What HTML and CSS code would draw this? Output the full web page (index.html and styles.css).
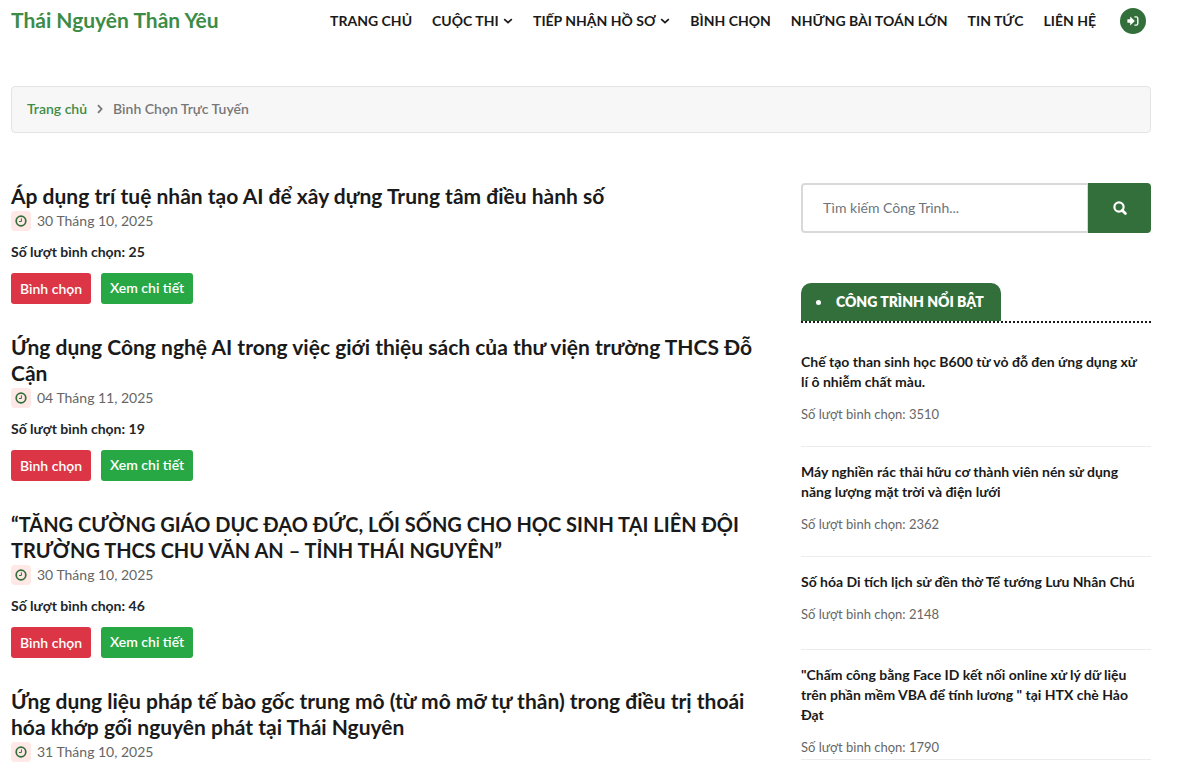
FILE: index.html
```html
<!DOCTYPE html>
<html lang="vi">
<head>
    <meta charset="UTF-8">
    <meta name="viewport" content="width=device-width, initial-scale=1.0">
    <title>Bình Chọn Trực Tuyến</title>
    <link rel="stylesheet" href="styles.css">
</head>
<body>
    <!-- shared icons -->
    <svg class="sprite" aria-hidden="true">
        <symbol id="clock" viewBox="0 0 12 12">
            <circle cx="6" cy="6" r="4.8" fill="none" stroke="currentColor" stroke-width="1.7"/>
            <path d="M6.4 3.4V6.5H4" fill="none" stroke="currentColor" stroke-width="1"/>
        </symbol>
        <symbol id="chevron" viewBox="0 0 10 6">
            <path d="M1.2 1.2L5 4.6L8.8 1.2" fill="none" stroke="currentColor" stroke-width="1.8"/>
        </symbol>
    </svg>

    <div class="container">
        <header class="header">
            <a href="#" class="logo">Thái Nguyên Thân Yêu</a>
            <nav class="menu">
                <a href="#">TRANG CHỦ</a>
                <a href="#">CUỘC THI <svg class="chevron"><use href="#chevron"/></svg></a>
                <a href="#">TIẾP NHẬN HỒ SƠ <svg class="chevron"><use href="#chevron"/></svg></a>
                <a href="#">BÌNH CHỌN</a>
                <a href="#">NHỮNG BÀI TOÁN LỚN</a>
                <a href="#">TIN TỨC</a>
                <a href="#">LIÊN HỆ</a>
                <a href="#" class="login" aria-label="Đăng nhập">
                    <svg width="12" height="10" viewBox="0 0 12 10">
                        <path d="M0.4 3.2H3.2V0.6L7.8 5L3.2 9.4V6.8H0.4Z" fill="#fff"/>
                        <path d="M7.4 0.9H9.2Q10.8 0.9 10.8 2.5V7.5Q10.8 9.1 9.2 9.1H7.4" fill="none" stroke="#fff" stroke-width="1.4"/>
                    </svg>
                </a>
            </nav>
        </header>

        <nav class="breadcrumb">
            <a href="#">Trang chủ</a>
            <svg width="6" height="10" viewBox="0 0 6 10"><path d="M1 1.2L4.6 5L1 8.8" fill="none" stroke="currentColor" stroke-width="1.8"/></svg>
            <span>Bình Chọn Trực Tuyến</span>
        </nav>

        <div class="layout">
            <main class="posts">
                <article class="post">
                    <h2><a href="#">Áp dụng trí tuệ nhân tạo AI để xây dựng Trung tâm điều hành số</a></h2>
                    <div class="date"><span class="date-icon"><svg><use href="#clock"/></svg></span>30 Tháng 10, 2025</div>
                    <p class="votes">Số lượt bình chọn: 25</p>
                    <div class="actions">
                        <button type="button" class="btn btn-danger">Bình chọn</button>
                        <a href="#" class="btn btn-success">Xem chi tiết</a>
                    </div>
                </article>

                <article class="post">
                    <h2><a href="#">Ứng dụng Công nghệ AI trong việc giới thiệu sách của thư viện trường THCS Đỗ Cận</a></h2>
                    <div class="date"><span class="date-icon"><svg><use href="#clock"/></svg></span>04 Tháng 11, 2025</div>
                    <p class="votes">Số lượt bình chọn: 19</p>
                    <div class="actions">
                        <button type="button" class="btn btn-danger">Bình chọn</button>
                        <a href="#" class="btn btn-success">Xem chi tiết</a>
                    </div>
                </article>

                <article class="post">
                    <h2 class="caps"><a href="#">“TĂNG CƯỜNG GIÁO DỤC ĐẠO ĐỨC, LỐI SỐNG CHO HỌC SINH TẠI LIÊN ĐỘI TRƯỜNG THCS CHU VĂN AN – TỈNH THÁI NGUYÊN”</a></h2>
                    <div class="date"><span class="date-icon"><svg><use href="#clock"/></svg></span>30 Tháng 10, 2025</div>
                    <p class="votes">Số lượt bình chọn: 46</p>
                    <div class="actions">
                        <button type="button" class="btn btn-danger">Bình chọn</button>
                        <a href="#" class="btn btn-success">Xem chi tiết</a>
                    </div>
                </article>

                <article class="post">
                    <h2><a href="#">Ứng dụng liệu pháp tế bào gốc trung mô (từ mô mỡ tự thân) trong điều trị thoái hóa khớp gối nguyên phát tại Thái Nguyên</a></h2>
                    <div class="date"><span class="date-icon"><svg><use href="#clock"/></svg></span>31 Tháng 10, 2025</div>
                </article>
            </main>

            <aside class="sidebar">
                <form class="search">
                    <input type="text" placeholder="Tìm kiếm Công Trình..." aria-label="Tìm kiếm Công Trình">
                    <button type="submit" aria-label="Tìm kiếm">
                        <svg width="14" height="14" viewBox="0 0 14 14"><circle cx="6" cy="6" r="4.6" fill="none" stroke="#fff" stroke-width="2.2"/><path d="M9.2 9.2L12.4 12.4" stroke="#fff" stroke-width="2.8" stroke-linecap="round"/></svg>
                    </button>
                </form>

                <div class="widget-title"><h3>CÔNG TRÌNH NỔI BẬT</h3></div>

                <ul class="featured">
                    <li>
                        <h4><a href="#">Chế tạo than sinh học B600 từ vỏ đỗ đen ứng dụng xử lí ô nhiễm chất màu.</a></h4>
                        <p>Số lượt bình chọn: 3510</p>
                    </li>
                    <li>
                        <h4><a href="#">Máy nghiền rác thải hữu cơ thành viên nén sử dụng năng lượng mặt trời và điện lưới</a></h4>
                        <p>Số lượt bình chọn: 2362</p>
                    </li>
                    <li>
                        <h4><a href="#">Số hóa Di tích lịch sử đền thờ Tể tướng Lưu Nhân Chú</a></h4>
                        <p>Số lượt bình chọn: 2148</p>
                    </li>
                    <li>
                        <h4><a href="#">"Chấm công bằng Face ID kết nối online xử lý dữ liệu trên phần mềm VBA để tính lương " tại HTX chè Hảo Đạt</a></h4>
                        <p>Số lượt bình chọn: 1790</p>
                    </li>
                </ul>
            </aside>
        </div>
    </div>
</body>
</html>
```
FILE: styles.css
```css
* {
    margin: 0;
    padding: 0;
    box-sizing: border-box;
}

body {
    background-color: #fff;
    color: #212529;
    font-family: Lato, "Noto Sans", sans-serif;
    font-size: 14px;
    line-height: 20px;
    padding-right: 20px;
}

a {
    color: inherit;
    text-decoration: none;
}

.sprite {
    display: none;
}

.container {
    max-width: 1140px;
    margin: 0 auto;
}

.header {
    display: flex;
    justify-content: space-between;
    align-items: center;
    height: 42px;
}

.logo {
    padding-bottom: 2px;
    color: #3c8c48;
    font-size: 21px;
    font-weight: 700;
}

.menu {
    display: flex;
    align-items: center;
    gap: 20px;
    padding-right: 5px;
    color: #1a1a1a;
    font-size: 14px;
    font-weight: 700;
    white-space: nowrap;
}

.chevron {
    width: 10px;
    height: 6px;
    margin-left: 1px;
    vertical-align: 2px;
}

.login {
    display: flex;
    align-items: center;
    justify-content: center;
    width: 26px;
    height: 26px;
    margin-left: 4px;
    border-radius: 50%;
    background-color: #336f3a;
}

.breadcrumb {
    display: flex;
    align-items: center;
    gap: 10px;
    margin-top: 44px;
    padding: 12px 15px 13px;
    border: 1px solid #e4e4e4;
    border-radius: 4px;
    background-color: #f7f7f7;
    color: #777;
    font-weight: 600;
}

.breadcrumb a {
    color: #3c8c48;
}

.layout {
    display: grid;
    grid-template-columns: 1fr 350px;
    gap: 40px;
    margin-top: 50px;
}

.post {
    margin-bottom: 30px;
}

.post h2 {
    color: #1a1a1a;
    font-size: 21px;
    font-weight: 700;
    line-height: 26px;
}

.post h2.caps {
    font-size: 20px;
}

.date {
    display: flex;
    align-items: center;
    gap: 6px;
    margin-top: 2px;
    color: #666;
    font-size: 14px;
}

.date-icon {
    display: flex;
    align-items: center;
    justify-content: center;
    width: 20px;
    height: 20px;
    border-radius: 4px;
    background-color: #ffe8e6;
    color: #336f3a;
}

.date-icon svg {
    width: 12px;
    height: 12px;
}

.votes {
    margin-top: 11px;
    font-weight: 700;
}

.actions {
    display: flex;
    gap: 10px;
    margin-top: 11px;
}

.btn {
    height: 31px;
    padding: 0 9px;
    border: none;
    border-radius: 3px;
    color: #fff;
    font-family: inherit;
    font-size: 14px;
    font-weight: 600;
    line-height: 30px;
    cursor: pointer;
}

.btn-danger {
    background-color: #dc3545;
}

.btn-success {
    background-color: #28a745;
}

.search {
    display: flex;
    height: 50px;
}

.search input {
    flex: 1;
    min-width: 0;
    padding: 0 20px 2px;
    border: 2px solid #d9d9d9;
    border-right-width: 1px;
    border-radius: 4px 0 0 4px;
    font-family: inherit;
    font-size: 14px;
    outline: none;
}

.search input::placeholder {
    color: #6c757d;
}

.search button {
    display: flex;
    align-items: center;
    justify-content: center;
    width: 63px;
    border: none;
    border-radius: 0 4px 4px 0;
    background-color: #336f3a;
    cursor: pointer;
}

.widget-title {
    margin-top: 50px;
    border-bottom: 2px dotted #1a1a1a;
}

.widget-title h3 {
    display: flex;
    align-items: center;
    gap: 15px;
    width: 200px;
    height: 38px;
    padding-left: 15px;
    border-radius: 10px 10px 0 0;
    background-color: #336f3a;
    color: #fff;
    font-size: 14px;
    font-weight: 800;
    white-space: nowrap;
}

.widget-title h3::before {
    content: "";
    width: 5px;
    height: 5px;
    border-radius: 50%;
    background-color: #fff;
}

.featured {
    margin-top: 29px;
    list-style: none;
}

.featured li {
    min-height: 78px;
    margin-bottom: 15px;
    padding-bottom: 22px;
    border-bottom: 1px solid #ececec;
}

.featured li:last-child {
    padding-bottom: 2px;
}

.featured h4 {
    padding-right: 8px;
    color: #1a1a1a;
    font-size: 14px;
    font-weight: 700;
}

.featured p {
    margin-top: 12px;
    color: #666;
    font-size: 13px;
}
```
